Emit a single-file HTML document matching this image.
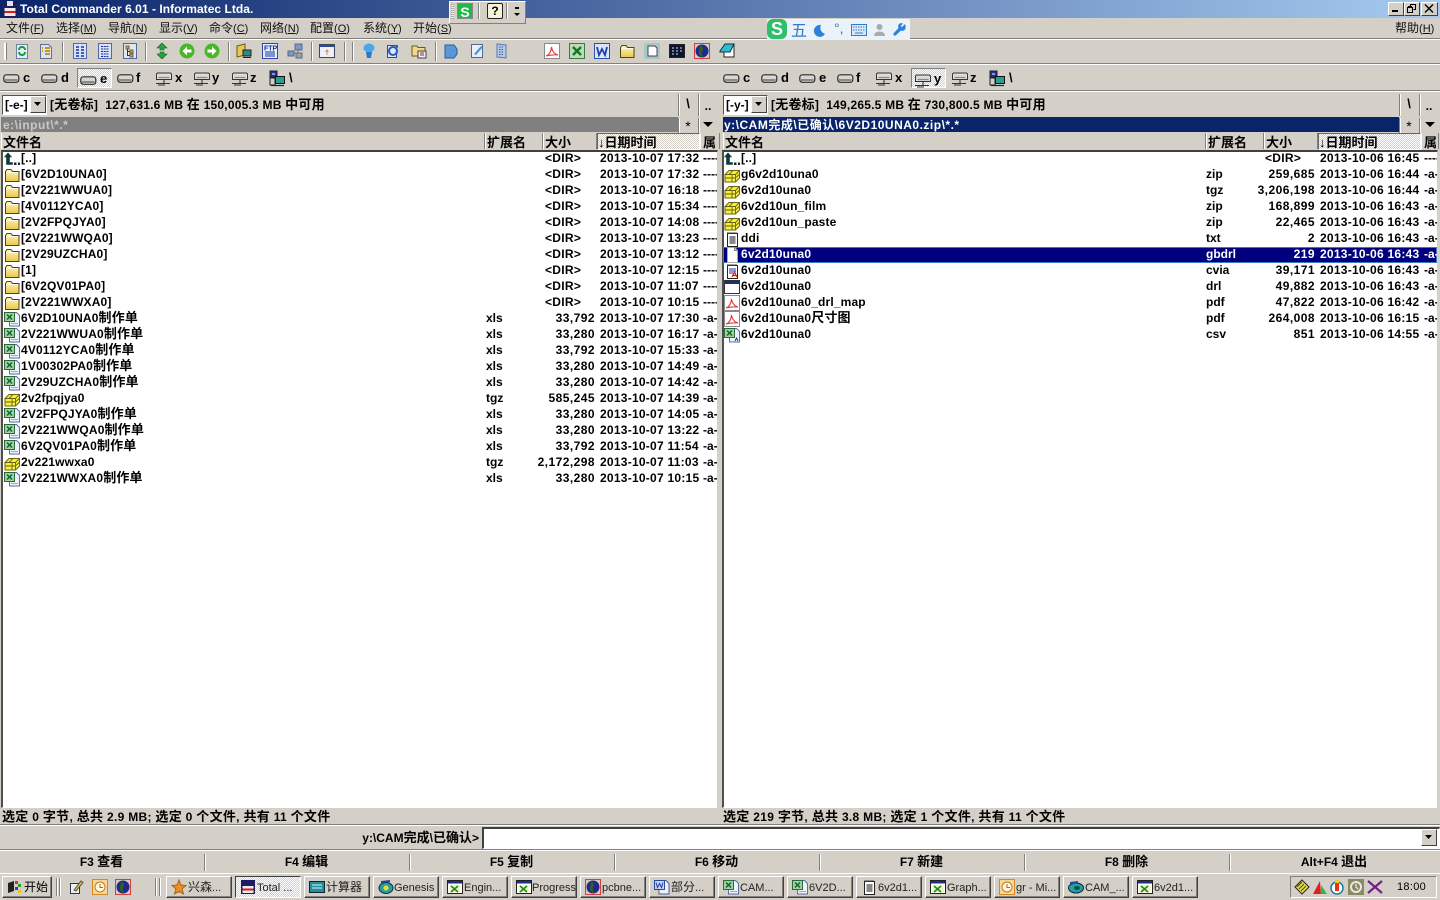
<!DOCTYPE html>
<html lang="zh"><head><meta charset="utf-8"><title>Total Commander 6.01</title>
<style>
html,body{margin:0;padding:0;width:1440px;height:900px;overflow:hidden;background:#D4D0C8}
body{position:relative;font:bold 12px "Liberation Sans","Noto Sans CJK SC",sans-serif;color:#000}
.a,.t{position:absolute;white-space:nowrap}
i{font-style:normal;font-size:13px;font-family:"Noto Sans CJK SC",sans-serif;font-weight:700;line-height:0}
u{text-decoration:underline}
.n{font-weight:400}
.n i{font-weight:400;font-size:12px}
.hl{position:absolute;left:0;width:1440px;height:1px;background:#808080}
.hw{position:absolute;left:0;width:1440px;height:1px;background:#fff}
.m{position:absolute;top:20px;line-height:18px;font-weight:400;font-size:11px;white-space:nowrap;color:#111}
.m i{font-weight:400;font-size:12px}
.ic{position:absolute;width:16px;height:16px}
.sep{position:absolute;width:1px;background:#808080;box-shadow:1px 0 0 #fff}
.dl{position:absolute;top:70px;line-height:16px;font-size:13px}
.panel{position:absolute;top:151px;width:720px}
.r{position:relative;height:16px;line-height:16px;width:716px}
.r svg{position:absolute;left:4px;top:0;width:16px;height:16px}
.r span{position:absolute;white-space:nowrap;top:-1px}
.x{left:21px;letter-spacing:.15px}.e{left:486px}.s{left:500px;width:95px;text-align:right;letter-spacing:.45px}.d{left:600px;letter-spacing:.25px}
.r .b{left:703px;width:14px;overflow:hidden}
.r .dir{left:545px;width:auto;text-align:left;letter-spacing:.3px}
.sel{background:#00007e;color:#fff;outline:1px solid #3c78c8;outline-offset:-1px}
.lst{position:absolute;top:150px;height:655px;background:#fff;border-top:2px solid #404040;border-left:2px solid #505050;border-right:1px solid #d4d0c8;border-bottom:1px solid #fff}
.hd{position:absolute;top:134px;height:17px;line-height:17px;font-size:13px}
.col{position:absolute;top:133px;height:16px;border-left:1px solid #fff;border-right:1px solid #808080}
.pressed{position:absolute;top:133px;height:15px;border:1px solid #666;border-right-color:#fff;border-bottom-color:#fff;background:repeating-conic-gradient(#fff 0 25%,#D4D0C8 0 50%) 0 0/2px 2px}
.rb{position:absolute;font-size:12px;text-align:center;width:20px}
.tb{position:absolute;top:876px;height:20px;width:64px;line-height:20px;font-size:11px;font-weight:400;background:#D4D0C8;border-top:1px solid #fff;border-left:1px solid #fff;border-right:1px solid #404040;border-bottom:1px solid #404040;box-shadow:inset -1px -1px 0 #808080;white-space:nowrap;overflow:hidden;color:#222}
.tb svg{position:absolute;left:4px;top:2px;width:16px;height:16px}
.tb span{position:absolute;left:21px;top:1px}
.tb i{font-weight:400;font-size:12px}
.fk{position:absolute;top:852px;height:20px;line-height:20px;width:205px;text-align:center;font-size:12px}
.fs{position:absolute;top:854px;height:17px;width:1px;background:#808080;box-shadow:1px 0 0 #fff}
.st{position:absolute;top:809px;line-height:16px;font-size:12px;white-space:nowrap;letter-spacing:.3px}
</style></head><body>

<svg width="0" height="0" style="position:absolute">
<defs><linearGradient id="fg" x1="0" y1="0" x2="0" y2="1"><stop offset="0" stop-color="#FFF8C0"/><stop offset="1" stop-color="#E8C84C"/></linearGradient></defs>
<symbol id="folder" viewBox="0 0 16 16"><path d="M1.500 14.500v-10l1.500-2h4l1.500 2h6.500v10z" fill="url(#fg)" stroke="#4a4418"/><path d="M2.500 5.500h12" stroke="#fffbe0"/></symbol>
<symbol id="tgz" viewBox="0 0 16 16"><path d="M1 7.500l4-4h10.500v7.500l-4 4H1z" fill="#F6EE3C" stroke="#6b6410"/><path d="M1 7.500h10.500v7.500M11.500 7.500l4-4M5 7.500l4-4M8 7.500V15M1 11h10.500M12 10.500l3-3" fill="none" stroke="#6b6410" stroke-width=".9"/></symbol>
<symbol id="xls" viewBox="0 0 16 16"><path d="M5.500 1.500h7l3 3v10.500h-10z" fill="#eef2fa" stroke="#5a6ea0"/><rect x=".5" y="1.500" width="10" height="9" fill="#a4d0a4" stroke="#2a6a3a"/><path d="M3 3.500l5 5M8 3.500l-5 5" stroke="#0c6a26" stroke-width="1.500"/><path d="M7 12.500h7" stroke="#9aaad0"/></symbol>
<symbol id="csv" viewBox="0 0 16 16"><path d="M5.500 1.500h7l3 3v10.500h-10z" fill="#eef2fa" stroke="#5a6ea0"/><rect x=".5" y="1.500" width="10" height="9" fill="#a4d0a4" stroke="#2a6a3a"/><path d="M3 3.500l5 5M8 3.500l-5 5" stroke="#0c6a26" stroke-width="1.500"/><path d="M11 14l1.500-3 1.500 3" fill="none" stroke="#203a90"/></symbol>
<symbol id="up" viewBox="0 0 16 16"><path d="M2.500 13.500V6H.5L4 2l3.500 4h-2v5.500h3v2z" fill="#0c3a38" stroke="#0c3a38" stroke-width=".6"/><rect x="10" y="11.500" width="2.500" height="2.500" fill="#222"/><rect x="14" y="11.500" width="2.500" height="2.500" fill="#222"/></symbol>
<symbol id="txt" viewBox="0 0 16 16"><rect x="3.500" y="2.500" width="10" height="13" fill="#fff" stroke="#222"/><path d="M4 1v2M6 1v2M8 1v2M10 1v2M12 1v2" stroke="#444"/><path d="M5.500 6h6M5.500 8h6M5.500 10h6M5.500 12h6" stroke="#111"/></symbol>
<symbol id="blank" viewBox="0 0 16 16"><path d="M3.500 .5h7l3 3V15.500h-10z" fill="#fff" stroke="#aaa"/><path d="M10.500 .5v3h3" fill="none" stroke="#888"/></symbol>
<symbol id="cvia" viewBox="0 0 16 16"><rect x="3.500" y="2.500" width="10" height="13" fill="#fff" stroke="#222"/><path d="M4 1v2M6 1v2M8 1v2M10 1v2M12 1v2" stroke="#444"/><path d="M5 6h7M5 8h7M5 10h4" stroke="#2030b0"/><path d="M8 14l2.500-5 2.500 5M9 12.500h3" fill="none" stroke="#d01818" stroke-width="1.200"/></symbol>
<symbol id="drl" viewBox="0 0 16 16"><rect x=".5" y="1.500" width="15" height="13" fill="#fff" stroke="#333"/><rect x="1" y="2" width="14" height="3" fill="#1a2f7a"/></symbol>
<symbol id="pdf" viewBox="0 0 16 16"><rect x=".5" y=".5" width="15" height="15" fill="#fff" stroke="#8a8a8a"/><path d="M2 13c3-1 5-4 5.500-9 .5 4 3 7 6.500 8-4-.5-8 .2-12 1z" fill="none" stroke="#e03a3a" stroke-width="1.100"/></symbol>
<symbol id="drv" viewBox="0 0 17 11"><rect x=".8" y="1.800" width="15" height="7.500" rx="2.500" fill="#d8d6d0" stroke="#2a2a2a" stroke-width="1.200"/><path d="M2 7h12.500" stroke="#777" stroke-width="1.600"/></symbol>
<symbol id="net" viewBox="0 0 18 14"><path d="M2.500 1h13l1 1v5.500h-15V2z" fill="#dedcd6" stroke="#333"/><path d="M3.500 5.500h11" stroke="#8a8a8a" stroke-width="1.300"/><path d="M9 8v3M1 11.500h14M3 13h7" stroke="#333" stroke-width="1.100"/></symbol>
<symbol id="pc" viewBox="0 0 17 17"><rect x="1" y="1" width="7" height="6" fill="#1c2ea0" stroke="#222"/><rect x="6.500" y="6.500" width="9" height="7" fill="#28a090" stroke="#111"/><rect x="1" y="8" width="5" height="7" fill="#cfcfcf" stroke="#222"/><path d="M2 15.500h13" stroke="#222" stroke-width="1.200"/><path d="M3 4h3" stroke="#fff"/></symbol>
<symbol id="win" viewBox="0 0 16 16"><rect x=".5" y="1.500" width="15" height="13" fill="#fff" stroke="#222"/><rect x="1" y="2" width="14" height="2.500" fill="#1a2f8a"/><rect x="2.500" y="6" width="11" height="7.500" fill="#f4f4c0"/><path d="M4 7l7 6M11 7l-7 6" stroke="#1a8a20" stroke-width="1.600"/></symbol>
<symbol id="globe" viewBox="0 0 16 16"><rect x=".5" y=".5" width="15" height="15" fill="#d8c8c8" stroke="#d04040"/><circle cx="8" cy="8" r="6.500" fill="#1a2c88"/><path d="M6 3c2 0 3 1 3 3S7 9 8 11s1 3 0 3C6 13 4 11 5 8s0-4 1-5z" fill="#3a5a28"/></symbol>
<symbol id="clock" viewBox="0 0 16 16"><rect x=".5" y=".5" width="15" height="15" fill="#f8d898" stroke="#d08a28"/><circle cx="8" cy="8" r="5" fill="#fff8e0" stroke="#c07a18"/><path d="M8 5v3.500h3" fill="none" stroke="#b06a10"/></symbol>
</svg>

<!-- title -->
<div class="a" style="left:0;top:0;width:1440px;height:18px;background:linear-gradient(90deg,#0A246A,#A6CAF0)"></div>
<svg class="a" style="left:2px;top:0" width="16" height="18" viewBox="0 0 16 18"><rect x="1" y="1" width="14" height="16" fill="#1c1c60"/><rect x="2.500" y="8" width="11" height="3" fill="#f4e8e8"/><rect x="2.500" y="11" width="11" height="2" fill="#d02020"/><rect x="2.500" y="13" width="11" height="3" fill="#f4e8e8"/><rect x="5" y="1" width="6" height="5" fill="#e0e0f0"/></svg>
<div class="t" style="left:20px;top:1px;line-height:16px;color:#fff;font-size:12px;letter-spacing:.04px">Total Commander 6.01 - Informatec Ltda.</div>

<!-- window buttons -->
<div class="a" style="left:1388px;top:2px;width:14px;height:12px;background:#D4D0C8;border:1px solid;border-color:#fff #404040 #404040 #fff"></div>
<div class="a" style="left:1392px;top:10px;width:6px;height:2px;background:#000"></div>
<div class="a" style="left:1404px;top:2px;width:14px;height:12px;background:#D4D0C8;border:1px solid;border-color:#fff #404040 #404040 #fff"></div>
<svg class="a" style="left:1407px;top:4px" width="10" height="9"><path d="M3.500 2.500V.5h5v5h-2M.5 3.500h5v5h-5z" fill="none" stroke="#000"/><path d="M1 2.500h4" stroke="#000"/></svg>
<div class="a" style="left:1421px;top:2px;width:15px;height:12px;background:#D4D0C8;border:1px solid;border-color:#fff #404040 #404040 #fff"></div>
<svg class="a" style="left:1424px;top:4px" width="10" height="9"><path d="M1 .5l8 8M9 .5l-8 8" stroke="#000" stroke-width="1.400"/></svg>

<!-- floating toolbar -->
<div class="a" style="left:449px;top:1px;width:75px;height:21px;background:#D4D0C8;border:1px solid;border-color:#fff #808080 #808080 #fff"></div>
<div class="a" style="left:451px;top:4px;width:3px;height:15px;background:repeating-linear-gradient(#aaa 0 1px,#eee 1px 2px)"></div>
<div class="a" style="left:457px;top:3px;width:16px;height:16px;background:#22b84a;color:#fff;text-align:center;font-size:14px;line-height:16px;font-weight:700;border:1px solid #888;box-sizing:border-box">S</div>
<div class="sep" style="left:478px;top:3px;height:16px"></div>
<div class="a" style="left:487px;top:3px;width:14px;height:14px;background:#f6f2d8;border:1px solid #222;border-radius:2px;text-align:center;line-height:14px;font-size:12px">?</div>
<div class="sep" style="left:506px;top:3px;height:16px"></div>
<div class="a" style="left:515px;top:7px;width:4px;height:2px;background:#000"></div>
<svg class="a" style="left:514px;top:13px" width="6" height="4"><path d="M0 0h6L3 3z" fill="#000"/></svg>

<!-- menu -->
<div class="m" style="left:6px"><i>文件</i>(<u>F</u>)</div>
<div class="m" style="left:56px"><i>选择</i>(<u>M</u>)</div>
<div class="m" style="left:108px"><i>导航</i>(<u>N</u>)</div>
<div class="m" style="left:159px"><i>显示</i>(<u>V</u>)</div>
<div class="m" style="left:209px"><i>命令</i>(<u>C</u>)</div>
<div class="m" style="left:260px"><i>网络</i>(<u>N</u>)</div>
<div class="m" style="left:310px"><i>配置</i>(<u>O</u>)</div>
<div class="m" style="left:363px"><i>系统</i>(<u>Y</u>)</div>
<div class="m" style="left:413px"><i>开始</i>(<u>S</u>)</div>
<div class="m" style="left:1395px"><i>帮助</i>(<u>H</u>)</div>
<div class="hl" style="top:38px"></div><div class="hw" style="top:39px"></div>

<!-- Sogou -->
<div class="a" style="left:767px;top:19px;width:143px;height:21px;background:#EAF2FA"></div>
<div class="a" style="left:767px;top:19px;width:20px;height:20px;background:#2fbf6a;border-radius:6px;color:#fff;text-align:center;line-height:20px;font-size:18px">S</div>
<div class="t" style="left:791px;top:19px;font:400 16px/21px 'Noto Sans CJK SC',sans-serif;color:#3878c8">五</div>
<svg class="a" style="left:812px;top:24px" width="14" height="14"><path d="M9 1a6 6 0 1 0 4 9 6.500 6.500 0 0 1-4-9z" fill="#2f80d8"/></svg>
<div class="t" style="left:834px;top:20px;line-height:16px;color:#3878c8;font-weight:400;font-size:14px">°,</div>
<svg class="a" style="left:851px;top:24px" width="16" height="12"><rect x=".5" y=".5" width="15" height="11" fill="#d8e8fa" stroke="#3878c8"/><path d="M2 3h12M2 6h12" stroke="#3878c8" stroke-dasharray="1.500 1"/><path d="M4 9h8" stroke="#3878c8"/></svg>
<svg class="a" style="left:873px;top:23px" width="13" height="14"><circle cx="6.500" cy="4" r="3" fill="#aaa"/><path d="M1 13c0-6 11-6 11 0z" fill="#aaa"/></svg>
<svg class="a" style="left:892px;top:22px" width="15" height="15"><path d="M13 2l-3 3-1.500-1L11 1.500C8 0 5 3 6.500 6L1 12l2 2 6-5.500C12 10 15 7 13 2z" fill="#2f80d8"/></svg>

<!-- toolbar -->
<div class="a" style="left:4px;top:43px;width:2px;height:17px;background:#fff;border-right:1px solid #808080"></div>
<div class="sep" style="left:62px;top:42px;height:19px"></div>
<div class="sep" style="left:145px;top:42px;height:19px"></div>
<div class="sep" style="left:228px;top:42px;height:19px"></div>
<div class="sep" style="left:311px;top:42px;height:19px"></div>
<div class="sep" style="left:344px;top:42px;height:19px"></div>
<div class="sep" style="left:352px;top:42px;height:19px"></div>
<div class="sep" style="left:435px;top:42px;height:19px"></div>

<svg class="ic" style="left:14px;top:43px" viewBox="0 0 16 16"><path d="M2.500 1.500h11v14h-11z" fill="#e4ecf8" stroke="#7080a0"/><path d="M5 7a3 3 0 0 1 6 0M11 9a3 3 0 0 1-6 0" fill="none" stroke="#10a030" stroke-width="2"/></svg>
<svg class="ic" style="left:38px;top:43px" viewBox="0 0 16 16"><path d="M2.500 1.500h8l3 3v11h-11z" fill="#dce4f4" stroke="#607090"/><path d="M7 5h5M7 8h5M7 11h5M4 5h1M4 8h1" stroke="#c89a18" stroke-width="2"/></svg>
<svg class="ic" style="left:72px;top:43px" viewBox="0 0 16 16"><rect x="1.500" y=".5" width="13" height="15" fill="#d8e2f6" stroke="#5068a8"/><path d="M4 4h3M9 4h3M4 7h3M9 7h3M4 10h3M9 10h3M4 13h3M9 13h3" stroke="#1830a0" stroke-width="1.500"/></svg>
<svg class="ic" style="left:97px;top:43px" viewBox="0 0 16 16"><rect x="1.500" y=".5" width="13" height="15" fill="#d8e2f6" stroke="#5068a8"/><path d="M4 3.500h8M4 6h8M4 8.500h8M4 11h8M4 13.500h8" stroke="#1830a0" stroke-dasharray="2 .7"/></svg>
<svg class="ic" style="left:122px;top:43px" viewBox="0 0 16 16"><rect x="1.500" y=".5" width="13" height="15" fill="#dfe8ea" stroke="#5068a8"/><path d="M4 3h3v3H4zM8 7h3v3H8zM8 11h3v3H8z" fill="#d8a818" stroke="#665"/><path d="M5.500 6v6.500H8M5.500 8.500H8" fill="none" stroke="#333"/></svg>
<svg class="ic" style="left:154px;top:43px" viewBox="0 0 16 16"><path d="M8 0l5 5H10v2H6V5H3zM8 16l-5-5h3V9h4v2h3z" fill="#2aa040" stroke="#0e6020" stroke-width=".6"/></svg>
<svg class="ic" style="left:179px;top:43px" viewBox="0 0 16 16"><circle cx="8" cy="8" r="7.500" fill="#48b828"/><path d="M8 3.500L3.500 8 8 12.500V9.500h4.500v-3H8z" fill="#fff"/></svg>
<svg class="ic" style="left:204px;top:43px" viewBox="0 0 16 16"><circle cx="8" cy="8" r="7.500" fill="#48b828"/><path d="M8 3.500L12.500 8 8 12.500V9.500H3.500v-3H8z" fill="#fff"/></svg>
<svg class="ic" style="left:236px;top:43px" viewBox="0 0 16 16"><path d="M1 3l8-2v11l-8 2z" fill="#e8c850" stroke="#6b5a10"/><rect x="7" y="7" width="8" height="6" fill="#2a8a88" stroke="#222"/><path d="M7 14.500h8" stroke="#222"/></svg>
<svg class="ic" style="left:262px;top:43px" viewBox="0 0 16 16"><rect x=".5" y=".5" width="15" height="15" fill="#e8eefa" stroke="#3048a0"/><path d="M3 9h10M3 11h10M3 13h10" stroke="#1830a0"/><text x="2" y="7.500" font-size="7" font-family="Liberation Sans" font-weight="700" fill="#1830a0">FTP</text></svg>
<svg class="ic" style="left:287px;top:43px" viewBox="0 0 16 16"><rect x="8" y="1" width="7" height="6" fill="#7898d0" stroke="#667"/><rect x="1" y="8" width="6" height="5" fill="#7898d0" stroke="#667"/><rect x="9" y="10" width="6" height="5" fill="#8aa" stroke="#667"/><path d="M7 10h2M11 7v3" stroke="#667"/></svg>
<svg class="ic" style="left:319px;top:43px" viewBox="0 0 16 16" ><rect x=".5" y="1.500" width="15" height="13" fill="#eef" stroke="#445"/><rect x="1" y="2" width="14" height="2" fill="#2a4aa0"/><path d="M8 6l2 3h-1.500v3h-1V9H6z" fill="#d89a18"/></svg>
<svg class="ic" style="left:361px;top:43px" viewBox="0 0 16 16"><ellipse cx="8" cy="5" rx="5.500" ry="4.500" fill="#48a8e8"/><path d="M5 9h6l-1 6H6z" fill="#2878c8"/></svg>
<svg class="ic" style="left:385px;top:43px" viewBox="0 0 16 16"><path d="M2.500 2.500h9v12h-9z" fill="#dde8fa" stroke="#3048a0"/><circle cx="8" cy="8" r="4" fill="none" stroke="#2858c0" stroke-width="2"/><path d="M10 3l3-1v3" fill="#2858c0"/></svg>
<svg class="ic" style="left:411px;top:43px" viewBox="0 0 16 16"><path d="M1 3h5l1 1.500h7V13H1z" fill="#f0d890" stroke="#6b5a10"/><rect x="7" y="8" width="8" height="7" fill="#eef" stroke="#444"/><path d="M9 10h4M9 12h4" stroke="#a02020"/></svg>
<svg class="ic" style="left:443px;top:43px" viewBox="0 0 16 16"><path d="M2 2h9l3 4v5l-3 4H2z" fill="#5898d8" stroke="#2a5a98"/></svg>
<svg class="ic" style="left:469px;top:43px" viewBox="0 0 16 16"><path d="M2.500 1.500h11v13h-11z" fill="#eaf0fa" stroke="#506890"/><path d="M5 11L12 3l1.500 1.500L7 12z" fill="#3898e0"/></svg>
<svg class="ic" style="left:494px;top:43px" viewBox="0 0 16 16"><path d="M3 1l9 1v13l-9-1z" fill="#b8c8e8" stroke="#5878b0"/><path d="M5 4h5M5 6.500h5M5 9h5M5 11.500h5" stroke="#3858a0" stroke-dasharray="1.500 1"/></svg>
<svg class="ic" style="left:544px;top:43px" viewBox="0 0 16 16"><use href="#pdf"/></svg>
<svg class="ic" style="left:569px;top:43px" viewBox="0 0 16 16"><rect x=".5" y=".5" width="15" height="15" fill="#bcdcb4" stroke="#3a7a48"/><path d="M4 4l8 8M12 4l-8 8" stroke="#0a7a28" stroke-width="2.400"/></svg>
<svg class="ic" style="left:594px;top:43px" viewBox="0 0 16 16"><rect x=".5" y=".5" width="15" height="15" fill="#dce4f8" stroke="#3050a8"/><path d="M3 4l2 8 3-6 3 6 2-8" fill="none" stroke="#2040a8" stroke-width="1.800"/></svg>
<svg class="ic" style="left:619px;top:43px" viewBox="0 0 16 16"><use href="#folder"/></svg>
<svg class="ic" style="left:644px;top:43px" viewBox="0 0 16 16"><rect x="0" y="0" width="16" height="16" fill="#a8c8c8"/><path d="M4 3h7l2 2v8H4z" fill="#fff" stroke="#445"/></svg>
<svg class="ic" style="left:669px;top:43px" viewBox="0 0 16 16"><rect x=".5" y="1.500" width="15" height="13" fill="#0c1430" stroke="#222"/><path d="M3 5h2M7 5h2M11 5h2M3 8h2M7 8h2M11 8h2M3 11h2M7 11h2" stroke="#cfe0ff"/></svg>
<svg class="ic" style="left:694px;top:43px" viewBox="0 0 16 16"><use href="#globe"/></svg>
<svg class="ic" style="left:719px;top:43px" viewBox="0 0 16 16"><path d="M11 3l4-2v13H5V9" fill="#fff" stroke="#222"/><path d="M1 8l5-7h9l-4 8H1z" fill="#28c0d0" stroke="#103040"/></svg>
<div class="hl" style="top:63px"></div><div class="hw" style="top:64px"></div>

<!-- drive bar left -->
<div class="a" style="left:77px;top:68px;width:33px;height:18px;border:1px solid;border-color:#808080 #fff #fff #808080;background:repeating-conic-gradient(#fff 0 25%,#D4D0C8 0 50%) 0 0/2px 2px"></div>
<svg class="a" style="left:3px;top:73px" width="17" height="11"><use href="#drv"/></svg><div class="dl" style="left:23px">c</div>
<svg class="a" style="left:41px;top:73px" width="17" height="11"><use href="#drv"/></svg><div class="dl" style="left:61px">d</div>
<svg class="a" style="left:80px;top:75px" width="17" height="11"><use href="#drv"/></svg><div class="dl" style="left:100px;top:71px">e</div>
<svg class="a" style="left:117px;top:73px" width="17" height="11"><use href="#drv"/></svg><div class="dl" style="left:136px">f</div>
<svg class="a" style="left:155px;top:72px" width="18" height="14"><use href="#net"/></svg><div class="dl" style="left:175px">x</div>
<svg class="a" style="left:193px;top:72px" width="18" height="14"><use href="#net"/></svg><div class="dl" style="left:212px">y</div>
<svg class="a" style="left:231px;top:72px" width="18" height="14"><use href="#net"/></svg><div class="dl" style="left:250px">z</div>
<svg class="a" style="left:269px;top:70px" width="17" height="17"><use href="#pc"/></svg><div class="dl" style="left:289px">\</div>

<!-- drive bar right -->
<div class="a" style="left:911px;top:68px;width:33px;height:18px;border:1px solid;border-color:#808080 #fff #fff #808080;background:repeating-conic-gradient(#fff 0 25%,#D4D0C8 0 50%) 0 0/2px 2px"></div>
<svg class="a" style="left:723px;top:73px" width="17" height="11"><use href="#drv"/></svg><div class="dl" style="left:743px">c</div>
<svg class="a" style="left:761px;top:73px" width="17" height="11"><use href="#drv"/></svg><div class="dl" style="left:781px">d</div>
<svg class="a" style="left:799px;top:73px" width="17" height="11"><use href="#drv"/></svg><div class="dl" style="left:819px">e</div>
<svg class="a" style="left:837px;top:73px" width="17" height="11"><use href="#drv"/></svg><div class="dl" style="left:856px">f</div>
<svg class="a" style="left:875px;top:72px" width="18" height="14"><use href="#net"/></svg><div class="dl" style="left:895px">x</div>
<svg class="a" style="left:914px;top:74px" width="18" height="14"><use href="#net"/></svg><div class="dl" style="left:934px;top:71px">y</div>
<svg class="a" style="left:951px;top:72px" width="18" height="14"><use href="#net"/></svg><div class="dl" style="left:970px">z</div>
<svg class="a" style="left:989px;top:70px" width="17" height="17"><use href="#pc"/></svg><div class="dl" style="left:1009px">\</div>
<div class="hl" style="top:90px"></div><div class="hw" style="top:91px"></div>

<!-- drive combo + free space -->
<div class="a" style="left:2px;top:95px;width:43px;height:18px;background:#fff;border-top:1px solid #555;border-left:1px solid #555;border-right:1px solid #fff;border-bottom:1px solid #fff"></div>
<div class="t" style="left:5px;top:97px;line-height:16px;font-size:12px">[-e-]</div>
<div class="a" style="left:30px;top:96px;width:14px;height:15px;background:#D4D0C8;border:1px solid;border-color:#fff #404040 #404040 #fff"></div>
<svg class="a" style="left:34px;top:102px" width="8" height="5"><path d="M0 0h7L3.500 4z" fill="#000"/></svg>
<div class="t" style="left:50px;top:97px;line-height:16px;letter-spacing:.22px">[<i>无卷标</i>]&nbsp; 127,631.6 MB <i>在</i> 150,005.3 MB <i>中可用</i></div>

<div class="a" style="left:723px;top:95px;width:43px;height:18px;background:#fff;border-top:1px solid #555;border-left:1px solid #555;border-right:1px solid #fff;border-bottom:1px solid #fff"></div>
<div class="t" style="left:726px;top:97px;line-height:16px;font-size:12px">[-y-]</div>
<div class="a" style="left:751px;top:96px;width:14px;height:15px;background:#D4D0C8;border:1px solid;border-color:#fff #404040 #404040 #fff"></div>
<svg class="a" style="left:755px;top:102px" width="8" height="5"><path d="M0 0h7L3.500 4z" fill="#000"/></svg>
<div class="t" style="left:771px;top:97px;line-height:16px;letter-spacing:.22px">[<i>无卷标</i>]&nbsp; 149,265.5 MB <i>在</i> 730,800.5 MB <i>中可用</i></div>

<!-- right small buttons -->
<div class="sep" style="left:678px;top:94px;height:22px"></div><div class="sep" style="left:698px;top:94px;height:22px"></div>
<div class="rb" style="left:678px;top:96px;line-height:16px;font-size:13px">\</div><div class="rb" style="left:698px;top:98px;line-height:16px">..</div>
<div class="sep" style="left:678px;top:118px;height:15px"></div><div class="sep" style="left:698px;top:118px;height:15px"></div>
<div class="rb" style="left:678px;top:118px;line-height:16px;font-size:14px;font-weight:400">*</div>
<svg class="a" style="left:703px;top:122px" width="10" height="6"><path d="M0 0h10L5 5z" fill="#000"/></svg>
<div class="sep" style="left:1399px;top:94px;height:22px"></div><div class="sep" style="left:1419px;top:94px;height:22px"></div>
<div class="rb" style="left:1399px;top:96px;line-height:16px;font-size:13px">\</div><div class="rb" style="left:1419px;top:98px;line-height:16px">..</div>
<div class="sep" style="left:1399px;top:118px;height:15px"></div><div class="sep" style="left:1419px;top:118px;height:15px"></div>
<div class="rb" style="left:1399px;top:118px;line-height:16px;font-size:14px;font-weight:400">*</div>
<svg class="a" style="left:1425px;top:122px" width="10" height="6"><path d="M0 0h10L5 5z" fill="#000"/></svg>

<!-- path bars -->
<div class="a" style="left:1px;top:117px;width:677px;height:15px;background:#808080"></div>
<div class="t" style="left:3px;top:118px;line-height:15px;color:#c8c8c8;font-size:12px;letter-spacing:.5px">e:\input\*.*</div>
<div class="a" style="left:723px;top:117px;width:676px;height:15px;background:#0A246A"></div>
<div class="t" style="left:724px;top:118px;line-height:15px;color:#fff;font-size:12px;letter-spacing:.5px">y:\CAM<i style="font-size:12px">完成</i>\<i style="font-size:12px">已确认</i>\6V2D10UNA0.zip\*.*</div>

<!-- headers left -->
<div class="col" style="left:1px;width:482px"></div>
<div class="col" style="left:485px;width:56px"></div>
<div class="col" style="left:543px;width:52px"></div>
<div class="pressed" style="left:597px;width:101px"></div>
<div class="col" style="left:700px;width:18px"></div>
<div class="hd" style="left:3px"><i>文件名</i></div>
<div class="hd" style="left:487px"><i>扩展名</i></div>
<div class="hd" style="left:545px"><i>大小</i></div>
<div class="hd" style="left:598px">↓<i>日期时间</i></div>
<div class="hd" style="left:703px;width:15px;overflow:hidden"><i>属性</i></div>
<!-- headers right -->
<div class="col" style="left:723px;width:481px"></div>
<div class="col" style="left:1206px;width:56px"></div>
<div class="col" style="left:1264px;width:52px"></div>
<div class="pressed" style="left:1318px;width:101px"></div>
<div class="col" style="left:1421px;width:16px"></div>
<div class="hd" style="left:725px"><i>文件名</i></div>
<div class="hd" style="left:1208px"><i>扩展名</i></div>
<div class="hd" style="left:1266px"><i>大小</i></div>
<div class="hd" style="left:1319px">↓<i>日期时间</i></div>
<div class="hd" style="left:1424px;width:14px;overflow:hidden"><i>属性</i></div>

<!-- lists -->
<div class="lst" style="left:1px;width:714px"></div>
<div class="lst" style="left:722px;width:713px"></div>

<div class="panel" style="left:0">
<div class="r"><svg><use href="#up"/></svg><span class="x">[..]</span><span class="s dir">&lt;DIR&gt;</span><span class="d">2013-10-07 17:32</span><span class="b">-----</span></div>
<div class="r"><svg><use href="#folder"/></svg><span class="x">[6V2D10UNA0]</span><span class="s dir">&lt;DIR&gt;</span><span class="d">2013-10-07 17:32</span><span class="b">-----</span></div>
<div class="r"><svg><use href="#folder"/></svg><span class="x">[2V221WWUA0]</span><span class="s dir">&lt;DIR&gt;</span><span class="d">2013-10-07 16:18</span><span class="b">-----</span></div>
<div class="r"><svg><use href="#folder"/></svg><span class="x">[4V0112YCA0]</span><span class="s dir">&lt;DIR&gt;</span><span class="d">2013-10-07 15:34</span><span class="b">-----</span></div>
<div class="r"><svg><use href="#folder"/></svg><span class="x">[2V2FPQJYA0]</span><span class="s dir">&lt;DIR&gt;</span><span class="d">2013-10-07 14:08</span><span class="b">-----</span></div>
<div class="r"><svg><use href="#folder"/></svg><span class="x">[2V221WWQA0]</span><span class="s dir">&lt;DIR&gt;</span><span class="d">2013-10-07 13:23</span><span class="b">-----</span></div>
<div class="r"><svg><use href="#folder"/></svg><span class="x">[2V29UZCHA0]</span><span class="s dir">&lt;DIR&gt;</span><span class="d">2013-10-07 13:12</span><span class="b">-----</span></div>
<div class="r"><svg><use href="#folder"/></svg><span class="x">[1]</span><span class="s dir">&lt;DIR&gt;</span><span class="d">2013-10-07 12:15</span><span class="b">-----</span></div>
<div class="r"><svg><use href="#folder"/></svg><span class="x">[6V2QV01PA0]</span><span class="s dir">&lt;DIR&gt;</span><span class="d">2013-10-07 11:07</span><span class="b">-----</span></div>
<div class="r"><svg><use href="#folder"/></svg><span class="x">[2V221WWXA0]</span><span class="s dir">&lt;DIR&gt;</span><span class="d">2013-10-07 10:15</span><span class="b">-----</span></div>
<div class="r"><svg><use href="#xls"/></svg><span class="x">6V2D10UNA0<i>制作单</i></span><span class="e">xls</span><span class="s">33,792</span><span class="d">2013-10-07 17:30</span><span class="b">-a---</span></div>
<div class="r"><svg><use href="#xls"/></svg><span class="x">2V221WWUA0<i>制作单</i></span><span class="e">xls</span><span class="s">33,280</span><span class="d">2013-10-07 16:17</span><span class="b">-a---</span></div>
<div class="r"><svg><use href="#xls"/></svg><span class="x">4V0112YCA0<i>制作单</i></span><span class="e">xls</span><span class="s">33,792</span><span class="d">2013-10-07 15:33</span><span class="b">-a---</span></div>
<div class="r"><svg><use href="#xls"/></svg><span class="x">1V00302PA0<i>制作单</i></span><span class="e">xls</span><span class="s">33,280</span><span class="d">2013-10-07 14:49</span><span class="b">-a---</span></div>
<div class="r"><svg><use href="#xls"/></svg><span class="x">2V29UZCHA0<i>制作单</i></span><span class="e">xls</span><span class="s">33,280</span><span class="d">2013-10-07 14:42</span><span class="b">-a---</span></div>
<div class="r"><svg><use href="#tgz"/></svg><span class="x">2v2fpqjya0</span><span class="e">tgz</span><span class="s">585,245</span><span class="d">2013-10-07 14:39</span><span class="b">-a---</span></div>
<div class="r"><svg><use href="#xls"/></svg><span class="x">2V2FPQJYA0<i>制作单</i></span><span class="e">xls</span><span class="s">33,280</span><span class="d">2013-10-07 14:05</span><span class="b">-a---</span></div>
<div class="r"><svg><use href="#xls"/></svg><span class="x">2V221WWQA0<i>制作单</i></span><span class="e">xls</span><span class="s">33,280</span><span class="d">2013-10-07 13:22</span><span class="b">-a---</span></div>
<div class="r"><svg><use href="#xls"/></svg><span class="x">6V2QV01PA0<i>制作单</i></span><span class="e">xls</span><span class="s">33,792</span><span class="d">2013-10-07 11:54</span><span class="b">-a---</span></div>
<div class="r"><svg><use href="#tgz"/></svg><span class="x">2v221wwxa0</span><span class="e">tgz</span><span class="s">2,172,298</span><span class="d">2013-10-07 11:03</span><span class="b">-a---</span></div>
<div class="r"><svg><use href="#xls"/></svg><span class="x">2V221WWXA0<i>制作单</i></span><span class="e">xls</span><span class="s">33,280</span><span class="d">2013-10-07 10:15</span><span class="b">-a---</span></div>
</div>

<div class="panel" style="left:720px">
<div class="r"><svg><use href="#up"/></svg><span class="x">[..]</span><span class="s dir">&lt;DIR&gt;</span><span class="d">2013-10-06 16:45</span><span class="b" style="left:704px;width:13px">-----</span></div>
<div class="r"><svg><use href="#tgz"/></svg><span class="x">g6v2d10una0</span><span class="e">zip</span><span class="s">259,685</span><span class="d">2013-10-06 16:44</span><span class="b" style="left:704px;width:13px">-a---</span></div>
<div class="r"><svg><use href="#tgz"/></svg><span class="x">6v2d10una0</span><span class="e">tgz</span><span class="s">3,206,198</span><span class="d">2013-10-06 16:44</span><span class="b" style="left:704px;width:13px">-a---</span></div>
<div class="r"><svg><use href="#tgz"/></svg><span class="x">6v2d10un_film</span><span class="e">zip</span><span class="s">168,899</span><span class="d">2013-10-06 16:43</span><span class="b" style="left:704px;width:13px">-a---</span></div>
<div class="r"><svg><use href="#tgz"/></svg><span class="x">6v2d10un_paste</span><span class="e">zip</span><span class="s">22,465</span><span class="d">2013-10-06 16:43</span><span class="b" style="left:704px;width:13px">-a---</span></div>
<div class="r"><svg><use href="#txt"/></svg><span class="x">ddi</span><span class="e">txt</span><span class="s">2</span><span class="d">2013-10-06 16:43</span><span class="b" style="left:704px;width:13px">-a---</span></div>
<div class="r sel" style="left:3px;width:714px"><svg style="left:1px"><use href="#blank"/></svg><span class="x" style="left:18px">6v2d10una0</span><span class="e" style="left:483px">gbdrl</span><span class="s" style="left:497px">219</span><span class="d" style="left:597px">2013-10-06 16:43</span><span class="b" style="left:701px;width:13px">-a---</span></div>
<div class="r"><svg><use href="#cvia"/></svg><span class="x">6v2d10una0</span><span class="e">cvia</span><span class="s">39,171</span><span class="d">2013-10-06 16:43</span><span class="b" style="left:704px;width:13px">-a---</span></div>
<div class="r"><svg><use href="#drl"/></svg><span class="x">6v2d10una0</span><span class="e">drl</span><span class="s">49,882</span><span class="d">2013-10-06 16:43</span><span class="b" style="left:704px;width:13px">-a---</span></div>
<div class="r"><svg><use href="#pdf"/></svg><span class="x">6v2d10una0_drl_map</span><span class="e">pdf</span><span class="s">47,822</span><span class="d">2013-10-06 16:42</span><span class="b" style="left:704px;width:13px">-a---</span></div>
<div class="r"><svg><use href="#pdf"/></svg><span class="x">6v2d10una0<i>尺寸图</i></span><span class="e">pdf</span><span class="s">264,008</span><span class="d">2013-10-06 16:15</span><span class="b" style="left:704px;width:13px">-a---</span></div>
<div class="r"><svg><use href="#csv"/></svg><span class="x">6v2d10una0</span><span class="e">csv</span><span class="s">851</span><span class="d">2013-10-06 14:55</span><span class="b" style="left:704px;width:13px">-a---</span></div>
</div>

<!-- status -->
<div class="st" style="left:2px"><i>选定</i> 0 <i>字节</i>, <i>总共</i> 2.9 MB; <i>选定</i> 0 <i>个文件</i>, <i>共有</i> 11 <i>个文件</i></div>
<div class="st" style="left:723px"><i>选定</i> 219 <i>字节</i>, <i>总共</i> 3.8 MB; <i>选定</i> 1 <i>个文件</i>, <i>共有</i> 11 <i>个文件</i></div>
<div class="hl" style="top:824px"></div><div class="hw" style="top:825px"></div>

<!-- command line -->
<div class="t" style="right:961px;top:829px;line-height:18px">y:\CAM<i>完成</i>\<i>已确认</i>&gt;</div>
<div class="a" style="left:482px;top:827px;width:955px;height:19px;background:#fff;border-top:2px solid #404040;border-left:2px solid #404040;border-right:1px solid #fff;border-bottom:1px solid #fff"></div>
<div class="a" style="left:1421px;top:829px;width:14px;height:15px;background:#D4D0C8;border:1px solid;border-color:#fff #404040 #404040 #fff"></div>
<svg class="a" style="left:1425px;top:835px" width="8" height="5"><path d="M0 0h7L3.500 4z" fill="#000"/></svg>
<div class="hl" style="top:849px"></div><div class="hw" style="top:850px"></div>

<!-- fkeys -->
<div class="fk" style="left:-1px">F3 <i>查看</i></div><div class="fs" style="left:204px"></div>
<div class="fk" style="left:204px">F4 <i>编辑</i></div><div class="fs" style="left:409px"></div>
<div class="fk" style="left:409px">F5 <i>复制</i></div><div class="fs" style="left:614px"></div>
<div class="fk" style="left:614px">F6 <i>移动</i></div><div class="fs" style="left:819px"></div>
<div class="fk" style="left:819px">F7 <i>新建</i></div><div class="fs" style="left:1024px"></div>
<div class="fk" style="left:1024px">F8 <i>删除</i></div><div class="fs" style="left:1229px"></div>
<div class="fk" style="left:1229px;width:210px">Alt+F4 <i>退出</i></div>
<div class="hw" style="top:873px"></div>

<!-- taskbar -->
<div class="tb" style="left:2px;width:48px;color:#000;font-weight:700"><svg style="left:3px"><path d="M2 4l6-2v10l-6 2z" fill="#222"/><path d="M9 2h3v3H9z" fill="#e03020"/><path d="M12 5h3v3h-3z" fill="#20a030"/><path d="M9 8h3v3H9z" fill="#2040d0"/><path d="M12 11h3v3h-3z" fill="#e8c020"/></svg><span style="left:21px"><i style="font-size:12px">开始</i></span></div>
<div class="sep" style="left:56px;top:878px;height:18px"></div><div class="sep" style="left:59px;top:878px;height:18px"></div>
<svg class="ic" style="left:68px;top:879px" viewBox="0 0 16 16"><path d="M2.500 4.500h9v10h-9z" fill="#e8f4fa" stroke="#334"/><path d="M6 11L13 2l2 1.500-7 8.500z" fill="#e0c040" stroke="#554"/></svg>
<svg class="ic" style="left:92px;top:879px" viewBox="0 0 16 16"><use href="#clock"/></svg>
<svg class="ic" style="left:115px;top:879px" viewBox="0 0 16 16"><use href="#globe"/></svg>
<div class="sep" style="left:155px;top:878px;height:18px"></div><div class="sep" style="left:159px;top:878px;height:18px"></div>

<div class="tb" style="left:166px"><svg viewBox="0 0 16 16"><path d="M8 1l2 5 5 .5-4 3.500 1.500 5L8 12.500 3.500 15 5 10 1 6.500 6 6z" fill="#e89028" stroke="#b06010"/></svg><span><i>兴森</i>...</span></div>
<div class="tb" style="left:235px;border-color:#404040 #fff #fff #404040;box-shadow:none;background:repeating-conic-gradient(#fff 0 25%,#D4D0C8 0 50%) 0 0/2px 2px"><svg viewBox="0 0 16 16"><rect x="1" y="1" width="14" height="14" fill="#1c1c60"/><rect x="2.500" y="7" width="11" height="2.500" fill="#f4e8e8"/><rect x="2.500" y="9.500" width="11" height="2" fill="#d02020"/><rect x="2.500" y="11.500" width="11" height="2.500" fill="#f4e8e8"/></svg><span>Total ...</span></div>
<div class="tb" style="left:304px"><svg viewBox="0 0 16 16"><rect x=".5" y="2.500" width="15" height="11" fill="#2a8aa0" stroke="#123"/><path d="M3 6h10M3 9h10" stroke="#cfe" /></svg><span><i>计算器</i></span></div>
<div class="tb" style="left:373px"><svg viewBox="0 0 16 16"><ellipse cx="8" cy="9" rx="7" ry="5.500" fill="#28a0a0" stroke="#124"/><circle cx="8" cy="9" r="2.500" fill="#e8e020"/><path d="M3 3l9-1" stroke="#2848a0" stroke-width="2"/></svg><span style="left:20px">Genesis</span></div>
<div class="tb" style="left:442px"><svg><use href="#win"/></svg><span>Engin...</span></div>
<div class="tb" style="left:511px"><svg><use href="#win"/></svg><span style="left:20px">Progress</span></div>
<div class="tb" style="left:580px"><svg><use href="#globe"/></svg><span>pcbne...</span></div>
<div class="tb" style="left:649px"><svg viewBox="0 0 16 16"><path d="M5 1.500h7l3 3V15H5z" fill="#eef2fa" stroke="#4a5e90"/><rect x=".5" y="1.500" width="10" height="9" fill="#c8d4f0" stroke="#2848a0"/><path d="M2 3.500l1.500 5 2-4 2 4L9 3.500" fill="none" stroke="#2040a8"/></svg><span><i>部分</i>...</span></div>
<div class="tb" style="left:718px"><svg><use href="#xls"/></svg><span>CAM...</span></div>
<div class="tb" style="left:787px"><svg><use href="#xls"/></svg><span>6V2D...</span></div>
<div class="tb" style="left:856px"><svg><use href="#txt"/></svg><span>6v2d1...</span></div>
<div class="tb" style="left:925px"><svg><use href="#win"/></svg><span>Graph...</span></div>
<div class="tb" style="left:994px"><svg><use href="#clock"/></svg><span>gr - Mi...</span></div>
<div class="tb" style="left:1063px"><svg viewBox="0 0 16 16"><ellipse cx="8" cy="9" rx="7.500" ry="5" fill="#28a0a0" stroke="#124"/><ellipse cx="9" cy="9" rx="3" ry="2" fill="#0c5050"/><path d="M2 4l8-1" stroke="#2848a0" stroke-width="2"/></svg><span>CAM_...</span></div>
<div class="tb" style="left:1132px"><svg><use href="#win"/></svg><span>6v2d1...</span></div>

<!-- tray -->
<div class="a" style="left:1290px;top:876px;width:145px;height:20px;border:1px solid;border-color:#808080 #fff #fff #808080"></div>
<svg class="ic" style="left:1294px;top:879px" viewBox="0 0 16 16"><path d="M1 8l7-7 7 7-7 7z" fill="#e8e048" stroke="#222"/><path d="M3 8l5-5M5 10l5-5M7 12l5-5" stroke="#443"/></svg>
<svg class="ic" style="left:1312px;top:879px" viewBox="0 0 16 16"><path d="M8 2L1 15h8z" fill="#e02020"/><path d="M9 6l6 9H9z" fill="#20c040"/></svg>
<svg class="ic" style="left:1329px;top:879px" viewBox="0 0 16 16"><circle cx="8" cy="9" r="6" fill="#fff" stroke="#1878a0" stroke-width="1.500"/><rect x="6" y="3" width="4" height="9" fill="#e83020"/><rect x="6" y="1" width="4" height="3" fill="#e8d020"/></svg>
<svg class="ic" style="left:1348px;top:879px" viewBox="0 0 16 16"><rect width="16" height="16" fill="#8a8a60"/><circle cx="8" cy="8" r="5" fill="none" stroke="#e8e8e8" stroke-width="2"/><path d="M8 5v3l2 2" stroke="#fff" fill="none"/></svg>
<svg class="ic" style="left:1367px;top:879px" viewBox="0 0 16 16"><path d="M1 2l14 12M15 2L1 14" stroke="#70208a" stroke-width="2.200"/></svg>
<div class="t n" style="left:1397px;top:879px;line-height:17px;font-size:11px;letter-spacing:.3px">18:00</div>
</body></html>
